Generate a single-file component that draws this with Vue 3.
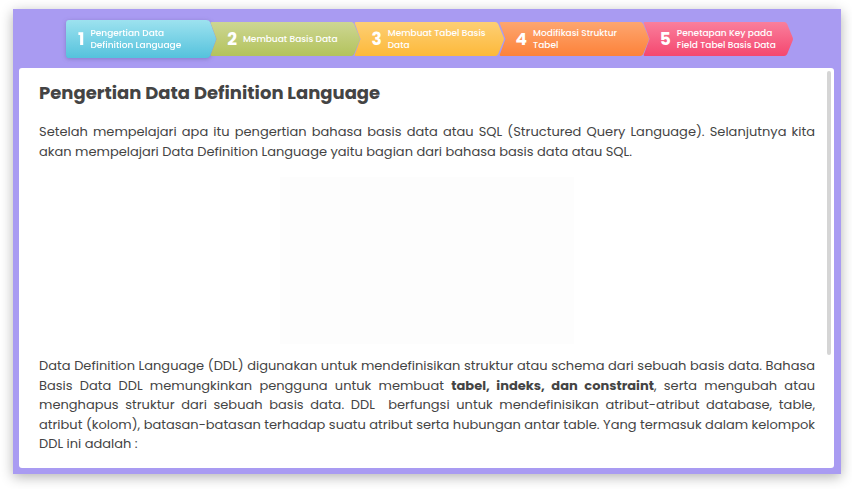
<script setup>
import { ref } from 'vue'

const active = ref(1)
const steps = [
  { id: 1, label: 'Pengertian Data\nDefinition Language', top: '#9de2ef', bottom: '#55c2dc' },
  { id: 2, label: 'Membuat Basis Data', top: '#cdd693', bottom: '#b3c35c' },
  { id: 3, label: 'Membuat Tabel Basis\nData', top: '#fdcf75', bottom: '#fdb93a' },
  { id: 4, label: 'Modifikasi Struktur\nTabel', top: '#fda670', bottom: '#fd8239' },
  { id: 5, label: 'Penetapan Key pada\nField Tabel Basis Data', top: '#f97f9c', bottom: '#f5476f' },
]
const firstShape = 'M3 0H140Q143 0 144 2L149.500 15.500Q150 17 149.500 18.500L144 32Q143 34 140 34H3Q0 34 0 31V3Q0 0 3 0Z'
const arrowShape = 'M2 0H141Q143 0 144 2L149.500 15.500Q150 17 149.500 18.500L144 32Q143 34 141 34H2Q0 34 1 32L6.500 17L1 2Q0 0 2 0Z'
</script>

<template>
  <main class="page">
    <section class="lesson">
      <nav class="steps" aria-label="Materi">
        <button
          v-for="step in steps"
          :key="step.id"
          type="button"
          class="step"
          :class="{ first: step.id === 1, active: step.id === active }"
          @click="active = step.id"
        >
          <svg class="shape" viewBox="0 0 150 34" preserveAspectRatio="none" aria-hidden="true">
            <defs>
              <linearGradient :id="`fill-${step.id}`" x1="0" y1="0" x2="0" y2="1">
                <stop offset="0" :stop-color="step.top" />
                <stop offset="1" :stop-color="step.bottom" />
              </linearGradient>
            </defs>
            <path :d="step.id === 1 ? firstShape : arrowShape" :fill="`url(#fill-${step.id})`" />
          </svg>
          <span class="number">{{ step.id }}</span>
          <span class="label">{{ step.label }}</span>
        </button>
      </nav>
      <div class="panel">
        <article class="content">
          <h1>Pengertian Data Definition Language</h1>
          <p>
            Setelah mempelajari apa itu pengertian bahasa basis data atau SQL (Structured Query Language). Selanjutnya kita
            akan mempelajari Data Definition Language yaitu bagian dari bahasa basis data atau SQL.
          </p>
          <div class="media"></div>
          <p>
            Data Definition Language (DDL) digunakan untuk mendefinisikan struktur atau schema dari sebuah basis data. Bahasa
            Basis Data DDL memungkinkan pengguna untuk membuat <strong>tabel, indeks, dan constraint</strong>, serta mengubah atau
            menghapus struktur dari sebuah basis data. DDL &nbsp;berfungsi untuk mendefinisikan atribut-atribut database, table,
            atribut (kolom), batasan-batasan terhadap suatu atribut serta hubungan antar table. Yang termasuk dalam kelompok
            DDL ini adalah :
          </p>
        </article>
        <div class="thumb"></div>
      </div>
    </section>
  </main>
</template>

<style>
body {
  background: #fff;
}
</style>

<style scoped>
.page {
  padding: 9px 11px 15px 13px;
  font-family: Poppins, Inter, sans-serif;
  color: #444;
}
.lesson {
  padding: 11px 7px 6px 6px;
  background: #a99bf2;
  box-shadow: 0 3px 12px rgba(0, 0, 0, 0.3);
}
.steps {
  display: grid;
  grid-template-columns: repeat(5, minmax(0, 1fr));
  align-items: center;
  padding: 0 47px;
  margin-bottom: 10px;
}
.step {
  position: relative;
  z-index: 0;
  box-sizing: border-box;
  width: calc(100% + 6px);
  height: 34px;
  margin: 0;
  padding: 0 0 0 17px;
  border: 0;
  background: none;
  display: flex;
  align-items: center;
  gap: 6px;
  font-family: inherit;
  color: #fff;
  text-align: left;
  cursor: pointer;
}
.step.first {
  padding-left: 12px;
}
.step.active {
  height: 38px;
  filter: drop-shadow(0 1px 2px rgba(50, 50, 100, 0.3));
}
.shape {
  position: absolute;
  inset: 0;
  z-index: -1;
  width: 100%;
  height: 100%;
}
.number {
  font-size: 17px;
  line-height: 20px;
  font-weight: 700;
}
.label {
  font-size: 9px;
  line-height: 12px;
  font-weight: 500;
  white-space: pre;
}
.panel {
  position: relative;
  background: #fff;
  border-radius: 3px;
}
.content {
  padding: 12px 19px 14px 20px;
}
h1 {
  margin: 0 0 17px;
  font-size: 18px;
  line-height: 25px;
  font-weight: 700;
}
p {
  margin: 0;
  font-size: 13px;
  line-height: 1.5;
  text-align: justify;
}
.media {
  width: 38%;
  height: 167px;
  margin: 16px auto 12px;
  background: #fdfdfd;
}
.thumb {
  position: absolute;
  top: 3px;
  right: 3px;
  width: 4px;
  height: 71%;
  border-radius: 2px;
  background: #d5d5d5;
}
</style>
